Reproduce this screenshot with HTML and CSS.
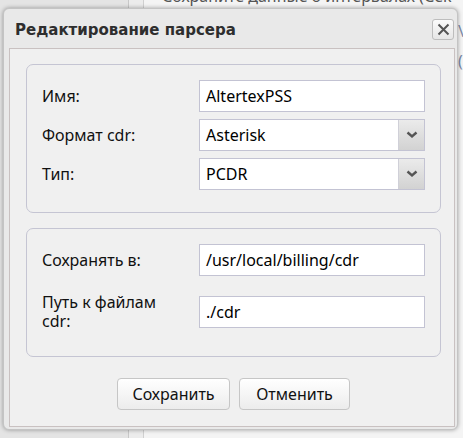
FILE: index.html
```html
<!DOCTYPE html>
<html lang="ru">

<head>
    <meta charset="UTF-8">
    <title>Редактирование парсера</title>
    <link rel="stylesheet" href="styles.css">
</head>

<body>
    <!-- page behind the modal -->
    <div class="backdrop">
        <div class="side"></div>
        <div class="side-strip"></div>
        <div class="page-text">Сохраните данные о интервалах (Сек</div>
        <div class="page-text page-text-2">\/</div>
        <div class="page-text page-text-3">(</div>
    </div>

    <div class="dialog">
        <div class="dialog-title">
            <span>Редактирование парсера</span>
            <button class="close-btn" type="button">
                <svg width="13" height="13" viewBox="0 0 13 13">
                    <path d="M1.5 1.5 L11.5 11.5 M11.5 1.5 L1.5 11.5" stroke="#555" stroke-width="2" fill="none" />
                </svg>
            </button>
        </div>

        <div class="dialog-body">
            <div class="group">
                <label class="field-label">Имя:</label>
                <div class="text-box">AltertexPSS</div>

                <label class="field-label">Формат cdr:</label>
                <div class="combo">
                    <span class="combo-text">Asterisk</span>
                    <span class="combo-btn">
                        <svg width="12" height="8" viewBox="0 0 12 8">
                            <path d="M1.5 1.5 L6 5.5 L10.5 1.5" stroke="#555" stroke-width="2.4" fill="none" />
                        </svg>
                    </span>
                </div>

                <label class="field-label">Тип:</label>
                <div class="combo">
                    <span class="combo-text">PCDR</span>
                    <span class="combo-btn">
                        <svg width="12" height="8" viewBox="0 0 12 8">
                            <path d="M1.5 1.5 L6 5.5 L10.5 1.5" stroke="#555" stroke-width="2.4" fill="none" />
                        </svg>
                    </span>
                </div>
            </div>

            <div class="group group-2">
                <label class="field-label">Сохранять в:</label>
                <div class="text-box">/usr/local/billing/cdr</div>

                <label class="field-label two-line">Путь к файлам cdr:</label>
                <div class="text-box">./cdr</div>
            </div>

            <div class="actions">
                <button class="btn btn-save" type="button">Сохранить</button>
                <button class="btn btn-cancel" type="button">Отменить</button>
            </div>
        </div>
    </div>
</body>

</html>
```

FILE: styles.css
```css
body {
    margin: 0;
    padding: 8px 0 0 3px;
    background: #f4f4f4;
    font-family: "Noto Sans", "Open Sans", sans-serif;
    position: relative;
    height: 430px;
    overflow: hidden;
}

/* background page, only its edges show */
.backdrop {
    position: absolute;
    left: 0;
    top: 0;
    width: 463px;
    height: 438px;
}

.side {
    position: absolute;
    left: 0;
    top: 0;
    width: 128px;
    height: 438px;
    background: #e4e4e4;
    border-right: 1px solid #c8c8c8;
}

.side-strip {
    position: absolute;
    left: 129px;
    top: 0;
    width: 14px;
    height: 438px;
    background: #ececec;
    border-right: 1px solid #d0d0d0;
}

.page-text {
    position: absolute;
    left: 162px;
    top: -15px;
    font-size: 16px;
    color: #555;
    white-space: nowrap;
}

.page-text-2 {
    left: 458px;
    top: 20px;
    color: #7a8aa8;
}

.page-text-3 {
    left: 458px;
    top: 50px;
    color: #7a8aa8;
}

.dialog {
    position: relative;
    width: 453px;
    height: 420px;
    background: #e9e9e9;
    border: 1px solid #c4c4c4;
    border-radius: 6px;
    box-shadow: 0 0 4px rgba(0, 0, 0, 0.35);
    display: flex;
    flex-direction: column;
}

.dialog-title {
    height: 39px;
    display: flex;
    align-items: center;
    justify-content: space-between;
    padding: 0 3px 0 11px;
}

.dialog-title span {
    font-family: "DejaVu Sans", sans-serif;
    font-weight: bold;
    font-size: 15px;
    color: #2e2e2e;
    margin-top: 2px;
}

.close-btn {
    width: 22px;
    height: 21px;
    padding: 0;
    border: 1px solid #bdbdbd;
    border-radius: 3px;
    background: linear-gradient(#fbfbfb, #e6e6e6);
    display: flex;
    align-items: center;
    justify-content: center;
    margin-top: 1px;
}

.dialog-body {
    flex: 1;
    margin: 0 2px 2px 5px;
    background: #f0f0f0;
    border: 1px solid #c9c1c1;
    display: flex;
    flex-direction: column;
    padding: 15px 13px 0 16px;
}

.group {
    border: 1px solid #c5c5d3;
    border-radius: 7px;
    padding: 15px 15px 22px 15px;
    display: grid;
    grid-template-columns: 157px 1fr;
    row-gap: 7px;
    align-items: center;
}

.group-2 {
    margin-top: 15px;
    row-gap: 16px;
    padding-bottom: 25px;
}

.field-label {
    font-size: 16px;
    color: #111;
    line-height: 19px;
}

.two-line {
    width: 120px;
    align-self: start;
    margin-top: 1px;
}

.text-box {
    height: 30px;
    border: 1px solid #c3c3d3;
    background: #fff;
    font-size: 16px;
    color: #000;
    padding: 0 6px;
    line-height: 30px;
    white-space: nowrap;
}

.combo {
    height: 30px;
    border: 1px solid #c3c3d3;
    background: #fff;
    display: flex;
}

.combo-text {
    flex: 1;
    font-size: 16px;
    color: #000;
    padding: 0 6px;
    line-height: 30px;
}

.combo-btn {
    width: 25px;
    border-left: 1px solid #d0d0d8;
    background: linear-gradient(#ebebeb, #d2d2d2);
    display: flex;
    align-items: center;
    justify-content: center;
}

.actions {
    display: flex;
    justify-content: center;
    gap: 9px;
    margin-top: 21px;
}

.btn {
    height: 32px;
    border: 1px solid #c6c6c6;
    border-radius: 4px;
    background: linear-gradient(#ffffff, #ececec);
    font-family: "Noto Sans", "Open Sans", sans-serif;
    font-size: 16px;
    color: #111;
    padding: 0;
}

.btn-save {
    width: 113px;
}

.btn-cancel {
    width: 111px;
}
```
